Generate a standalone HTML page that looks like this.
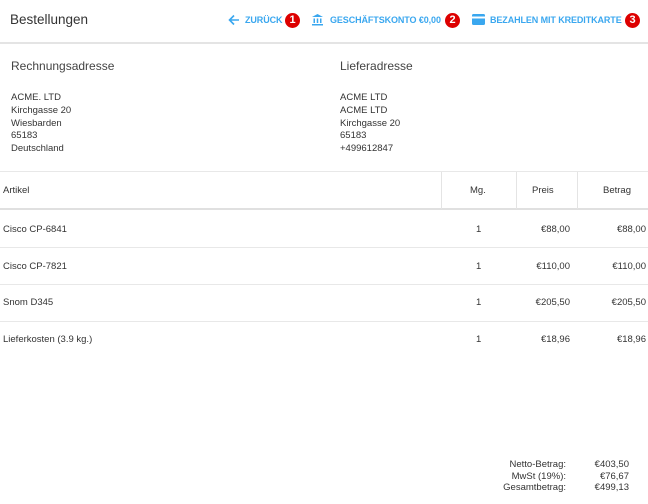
<!DOCTYPE html>
<html><head><meta charset="utf-8"><style>
*{margin:0;padding:0;box-sizing:border-box}
body{width:648px;height:504px;background:#fff;font-family:"Liberation Sans",sans-serif;color:#333;position:relative;overflow:hidden;font-size:9.5px}
.a{position:absolute;white-space:nowrap}
.hdr{position:absolute;left:0;top:0;width:648px;height:44px;border-bottom:2px solid #e4e4e4}
.btn{color:#3aa7ef;font-size:9px;font-weight:bold;top:15px;letter-spacing:-0.1px}
.badge{position:absolute;width:15px;height:15px;border-radius:50%;background:#d00;color:#fff;font-size:11px;font-weight:bold;text-align:center;line-height:15px;top:13px}
.line{position:absolute;left:0;width:648px;height:1px;background:#e8e8e8}
.vl{position:absolute;width:1px;background:#e4e4e4;top:172px;height:37px}
</style></head><body>
<div class="hdr"></div>
<div class="a" style="left:10px;top:12px;font-size:13.5px;color:#333">Bestellungen</div>
<svg class="a" style="left:228px;top:14px" width="12" height="12" viewBox="0 0 12 12"><path d="M11 6H2M6 1.5L1.5 6 6 10.5" stroke="#3aa7ef" stroke-width="1.6" fill="none"/></svg>
<div class="a btn" style="left:245px">ZURÜCK</div>
<div class="badge" style="left:285px">1</div>
<svg class="a" style="left:311px;top:13px" width="13" height="13" viewBox="0 0 13 13"><path d="M1 4L6.5 1 12 4zM1 11h11v1.5H1zM2.5 5.5h1.5v4.5H2.5zM5.75 5.5h1.5v4.5h-1.5zM9 5.5h1.5v4.5H9z" fill="#3aa7ef"/></svg>
<div class="a btn" style="left:330px">GESCHÄFTSKONTO €0,00</div>
<div class="badge" style="left:445px">2</div>
<svg class="a" style="left:472px;top:14px" width="13" height="11" viewBox="0 0 13 11"><rect x="0" y="0" width="13" height="11" rx="1.5" fill="#3aa7ef"/><rect x="0" y="2.5" width="13" height="2" fill="#fff"/></svg>
<div class="a btn" style="left:490px">BEZAHLEN MIT KREDITKARTE</div>
<div class="badge" style="left:625px">3</div>

<div class="a" style="left:11px;top:59px;font-size:12px;color:#444">Rechnungsadresse</div>
<div class="a" style="left:340px;top:59px;font-size:12px;color:#444">Lieferadresse</div>
<div class="a" style="left:11px;top:92px;line-height:12.8px">ACME. LTD<br>Kirchgasse 20<br>Wiesbarden<br>65183<br>Deutschland</div>
<div class="a" style="left:340px;top:92px;line-height:12.8px">ACME LTD<br>ACME LTD<br>Kirchgasse 20<br>65183<br>+499612847</div>

<div class="line" style="top:171px"></div>
<div class="line" style="top:208px;height:2px;background:#e0e0e0"></div>
<div class="vl" style="left:441px"></div><div class="vl" style="left:516px"></div><div class="vl" style="left:577px"></div>
<div class="a" style="left:3px;top:185px">Artikel</div>
<div class="a" style="left:470px;top:185px">Mg.</div>
<div class="a" style="left:532px;top:185px">Preis</div>
<div class="a" style="left:603px;top:185px">Betrag</div>

<div class="a" style="left:3px;top:224px">Cisco CP-6841</div>
<div class="a" style="left:476px;top:224px">1</div>
<div class="a" style="right:78px;top:224px">€88,00</div>
<div class="a" style="right:2px;top:224px">€88,00</div>
<div class="line" style="top:247px"></div>
<div class="a" style="left:3px;top:261px">Cisco CP-7821</div>
<div class="a" style="left:476px;top:261px">1</div>
<div class="a" style="right:78px;top:261px">€110,00</div>
<div class="a" style="right:2px;top:261px">€110,00</div>
<div class="line" style="top:284px"></div>
<div class="a" style="left:3px;top:297px">Snom D345</div>
<div class="a" style="left:476px;top:297px">1</div>
<div class="a" style="right:78px;top:297px">€205,50</div>
<div class="a" style="right:2px;top:297px">€205,50</div>
<div class="line" style="top:321px"></div>
<div class="a" style="left:3px;top:334px">Lieferkosten (3.9 kg.)</div>
<div class="a" style="left:476px;top:334px">1</div>
<div class="a" style="right:78px;top:334px">€18,96</div>
<div class="a" style="right:2px;top:334px">€18,96</div>

<div class="a" style="right:82px;top:459px;text-align:right;line-height:11.5px">Netto-Betrag:<br>MwSt (19%):<br>Gesamtbetrag:</div>
<div class="a" style="right:19px;top:459px;text-align:right;line-height:11.5px">€403,50<br>€76,67<br>€499,13</div>
</body></html>
